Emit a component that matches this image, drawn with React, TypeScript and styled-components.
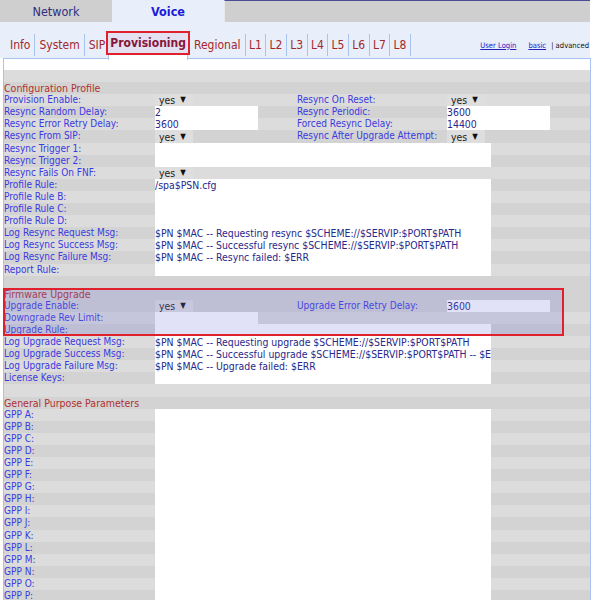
import React from "react";
import styled, { createGlobalStyle } from "styled-components";

const GlobalStyle = createGlobalStyle`
  html, body { margin: 0; padding: 0; background: #ffffff; }
  body { font-family: "DejaVu Sans Condensed", "DejaVu Sans", Verdana, sans-serif; }
`;

const Page = styled.div`
  width: 600px;
  height: 600px;
  overflow: hidden;
  background: #ffffff;
`;

const TopTabs = styled.div`
  display: flex;
  width: 590px;
  height: 22px;
  background: #cfcfcf;
`;

const TopTab = styled.div<{ $active?: boolean }>`
  width: 112px;
  display: flex;
  align-items: center;
  justify-content: center;
  font-size: 12.5px;
  font-weight: ${(p) => (p.$active ? 700 : 400)};
  color: ${(p) => (p.$active ? "#1c1cd6" : "#2e2e7e")};
  background: ${(p) => (p.$active ? "#e8eefa" : "#cfcfcf")};
`;

const TopFiller = styled.div`
  flex: 1;
  border-top: 1px solid #4b4b96;
  border-left: 1px solid #e8e8e8;
`;

const SubNav = styled.div`
  display: flex;
  align-items: flex-end;
  width: 590px;
  height: 36px;
  box-sizing: border-box;
  padding-left: 6px;
  padding-bottom: 2px;
  background: #e8eefa;
`;

const SubTab = styled.div<{ $active?: boolean; $noSep?: boolean; $narrow?: boolean }>`
  position: relative;
  height: 22px;
  display: flex;
  align-items: center;
  padding: 0 ${(p) => (p.$noSep ? "0" : p.$narrow ? "3.4px" : "4px")} 0
    ${(p) => (p.$narrow ? "3.4px" : "4px")};
  font-size: 12px;
  color: #a3282c;
  border-right: 1px solid ${(p) => (p.$noSep ? "transparent" : "#a9c3f0")};
  ${(p) =>
    p.$active &&
    `
    height: 20px;
    margin-bottom: 1px;
    padding: 0 2px;
    border: 2px solid #e0202c;
    background: #e3e0f1;
    color: #86163a;
    font-weight: 700;
    &::after {
      content: "";
      position: absolute;
      z-index: 1;
      left: 0;
      right: 0;
      top: calc(100% + 2px);
      height: 5px;
      background: #ffffff;
      border-left: 1px solid #a9c3f0;
      border-right: 1px solid #a9c3f0;
    }
  `}
`;

const AuxLinks = styled.div`
  margin-left: auto;
  height: 22px;
  display: flex;
  align-items: center;
  padding-right: 1px;
  font-size: 7.6px;
`;

const AuxLink = styled.span<{ $gap: number }>`
  color: #2323c4;
  text-decoration: underline;
  margin-right: ${(p) => p.$gap}px;
`;

const AuxText = styled.span`
  color: #111111;
`;

const Content = styled.div`
  margin-left: 3px;
  width: 588px;
  box-sizing: border-box;
  border: 1px solid #a9c3f0;
  padding-top: 11px;
  background: #ffffff;
`;

const Row = styled.div<{ $dark?: boolean }>`
  display: grid;
  grid-template-columns: 151px 142px 150px 1fr;
  height: 12.1px;
  background: ${(p) => (p.$dark ? "#d3d3d3" : "#dcdcdc")};
  font-size: 10px;
  line-height: 12px;
  white-space: nowrap;
  overflow: hidden;
`;

const Heading = styled.div`
  grid-column: 1 / -1;
  color: #b03030;
  font-size: 10.5px;
`;

const Label = styled.div`
  color: #3a3ae0;
  overflow: hidden;
`;

const Cell = styled.div`
  overflow: hidden;
`;

const Select = styled.div`
  width: 38px;
  height: 100%;
  box-sizing: border-box;
  padding-left: 4px;
  background: #dedede;
  color: #222222;
  display: flex;
  align-items: center;
  gap: 5px;
  font-size: 10.4px;
`;

const Arrow = styled.span`
  font-size: 8px;
  line-height: 8px;
  color: #111111;
`;

const Input = styled.div<{ $wide?: boolean }>`
  width: ${(p) => (p.$wide ? "336px" : "103px")};
  height: 100%;
  background: #ffffff;
  color: #28288a;
  font-size: 10.4px;
  overflow: hidden;
  ${(p) => (p.$wide ? "grid-column: 2 / -1;" : "")}
`;

const Highlight = styled.div`
  position: relative;
  &::after {
    content: "";
    position: absolute;
    left: -1px;
    top: 0;
    width: 561px;
    height: 100%;
    box-sizing: border-box;
    border: 2px solid #e0202c;
    background: rgba(120, 120, 225, 0.22);
    pointer-events: none;
  }
`;

type V = { kind: "select" } | { kind: "input"; text: string } | { kind: "none" };
type RowDef =
  | { type: "blank" }
  | { type: "heading"; text: string }
  | { type: "wide"; label: string; text: string }
  | { type: "pair"; label: string; value: V; label2?: string; value2?: V };

const yes: V = { kind: "select" };
const inp = (text: string): V => ({ kind: "input", text });

const configRows: RowDef[] = [
  { type: "blank" },
  { type: "heading", text: "Configuration Profile" },
  { type: "pair", label: "Provision Enable:", value: yes, label2: "Resync On Reset:", value2: yes },
  { type: "pair", label: "Resync Random Delay:", value: inp("2"), label2: "Resync Periodic:", value2: inp("3600") },
  { type: "pair", label: "Resync Error Retry Delay:", value: inp("3600"), label2: "Forced Resync Delay:", value2: inp("14400") },
  { type: "pair", label: "Resync From SIP:", value: yes, label2: "Resync After Upgrade Attempt:", value2: yes },
  { type: "wide", label: "Resync Trigger 1:", text: "" },
  { type: "wide", label: "Resync Trigger 2:", text: "" },
  { type: "pair", label: "Resync Fails On FNF:", value: yes },
  { type: "wide", label: "Profile Rule:", text: "/spa$PSN.cfg" },
  { type: "wide", label: "Profile Rule B:", text: "" },
  { type: "wide", label: "Profile Rule C:", text: "" },
  { type: "wide", label: "Profile Rule D:", text: "" },
  { type: "wide", label: "Log Resync Request Msg:", text: "$PN $MAC -- Requesting resync $SCHEME://$SERVIP:$PORT$PATH" },
  { type: "wide", label: "Log Resync Success Msg:", text: "$PN $MAC -- Successful resync $SCHEME://$SERVIP:$PORT$PATH" },
  { type: "wide", label: "Log Resync Failure Msg:", text: "$PN $MAC -- Resync failed: $ERR" },
  { type: "wide", label: "Report Rule:", text: "" },
  { type: "blank" },
];

const firmwareRows: RowDef[] = [
  { type: "heading", text: "Firmware Upgrade" },
  { type: "pair", label: "Upgrade Enable:", value: yes, label2: "Upgrade Error Retry Delay:", value2: inp("3600") },
  { type: "pair", label: "Downgrade Rev Limit:", value: inp("") },
  { type: "wide", label: "Upgrade Rule:", text: "" },
];

const afterRows: RowDef[] = [
  { type: "wide", label: "Log Upgrade Request Msg:", text: "$PN $MAC -- Requesting upgrade $SCHEME://$SERVIP:$PORT$PATH" },
  { type: "wide", label: "Log Upgrade Success Msg:", text: "$PN $MAC -- Successful upgrade $SCHEME://$SERVIP:$PORT$PATH -- $ERR" },
  { type: "wide", label: "Log Upgrade Failure Msg:", text: "$PN $MAC -- Upgrade failed: $ERR" },
  { type: "wide", label: "License Keys:", text: "" },
  { type: "blank" },
  { type: "heading", text: "General Purpose Parameters" },
  ..."ABCDEFGHIJKLMNOP".split("").map((c) => ({ type: "wide" as const, label: `GPP ${c}:`, text: "" })),
];

const lines = ["L1", "L2", "L3", "L4", "L5", "L6", "L7", "L8"];

function Value({ v }: { v?: V }) {
  if (!v || v.kind === "none") return <Cell />;
  if (v.kind === "select")
    return (
      <Cell>
        <Select>
          yes<Arrow>▼</Arrow>
        </Select>
      </Cell>
    );
  return (
    <Cell>
      <Input>{v.text}</Input>
    </Cell>
  );
}

function renderRow(r: RowDef, idx: number) {
  const dark = idx % 2 === 1;
  switch (r.type) {
    case "blank":
      return <Row key={idx} $dark={dark} />;
    case "heading":
      return (
        <Row key={idx} $dark>
          <Heading>{r.text}</Heading>
        </Row>
      );
    case "wide":
      return (
        <Row key={idx} $dark={dark}>
          <Label>{r.label}</Label>
          <Input $wide>{r.text}</Input>
        </Row>
      );
    case "pair":
      return (
        <Row key={idx} $dark={dark}>
          <Label>{r.label}</Label>
          <Value v={r.value} />
          <Label>{r.label2 ?? ""}</Label>
          <Value v={r.value2} />
        </Row>
      );
  }
}

export default function App() {
  const off1 = configRows.length;
  const off2 = off1 + firmwareRows.length;
  return (
    <Page>
      <GlobalStyle />
      <TopTabs>
        <TopTab>Network</TopTab>
        <TopTab $active>Voice</TopTab>
        <TopFiller />
      </TopTabs>
      <SubNav>
        <SubTab>Info</SubTab>
        <SubTab>System</SubTab>
        <SubTab $noSep>SIP</SubTab>
        <SubTab $active>Provisioning</SubTab>
        <SubTab>Regional</SubTab>
        {lines.map((l) => (
          <SubTab key={l} $narrow>
            {l}
          </SubTab>
        ))}
        <AuxLinks>
          <AuxLink $gap={12}>User Login</AuxLink>
          <AuxLink $gap={5}>basic</AuxLink>
          <AuxText>| advanced</AuxText>
        </AuxLinks>
      </SubNav>
      <Content>
        {configRows.map((r, i) => renderRow(r, i))}
        <Highlight>{firmwareRows.map((r, i) => renderRow(r, off1 + i))}</Highlight>
        {afterRows.map((r, i) => renderRow(r, off2 + i))}
      </Content>
    </Page>
  );
}
